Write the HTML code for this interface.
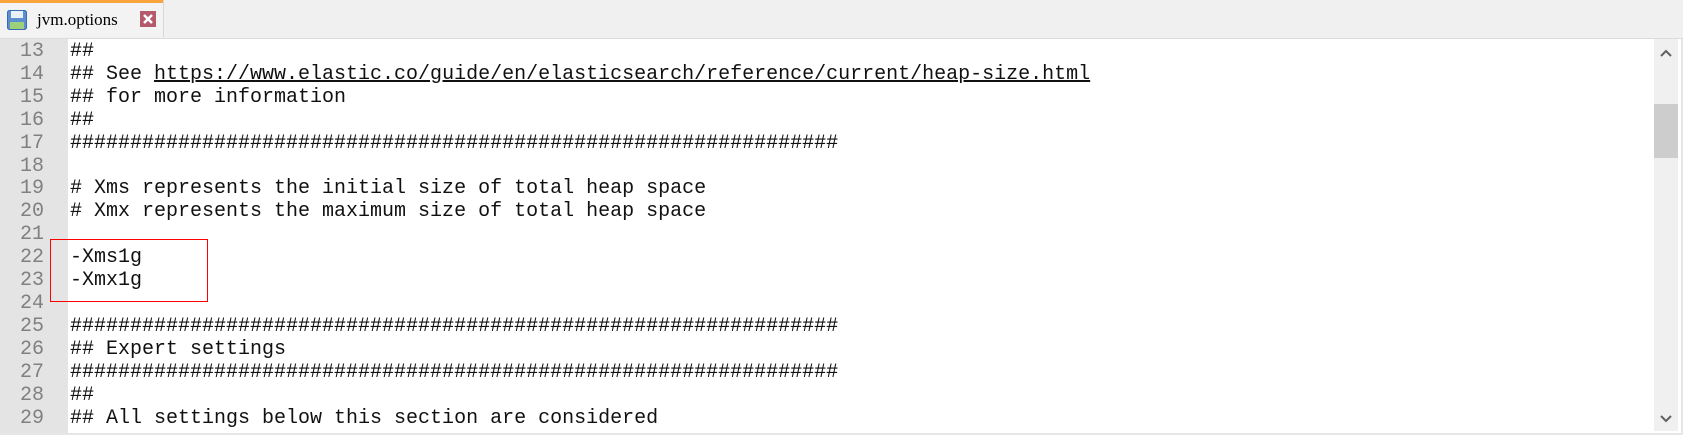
<!DOCTYPE html>
<html><head><meta charset="utf-8"><style>
body{margin:0;width:1683px;height:435px;background:#f0f0f0;position:relative;overflow:hidden;font-family:"Liberation Sans",sans-serif}
.tab{position:absolute;left:0;top:0;width:163px;height:37px;background:#f3f3f3;border-right:1px solid #d8d8d8}
.tab .bar{position:absolute;left:0;top:0;width:163px;height:3px;background:#f9a43c}
.tab .t{position:absolute;left:37px;top:10px;font-size:17px;font-family:"Liberation Serif","Noto Serif CJK SC",serif;color:#000}
.ed{position:absolute;left:0;top:38px;width:1681px;height:394px;background:#fff;border-top:1px solid #dcdcdc;border-right:2px solid #e6e6e6;border-bottom:2px solid #e6e6e6}
.gut{position:absolute;left:0;top:0;width:68px;height:394px;background:#e4e4e4}
.ln{position:absolute;left:0;width:44px;text-align:right;color:#808080;font:20px/22.9px "Liberation Mono",monospace;white-space:pre}
.code{position:absolute;left:70px;font:20px/22.9px "Liberation Mono",monospace;white-space:pre;color:#111}
.sb{position:absolute;left:1654px;top:0;width:24px;height:392px;background:#f0f0f0}
.th{position:absolute;left:1654px;top:65px;width:24px;height:54px;background:#cdcdcd}
.box{position:absolute;left:50px;top:239px;width:156px;height:61px;border:1px solid #f00}
</style></head><body>
<div class="tab"><div class="bar"></div>
<svg style="position:absolute;left:7px;top:10px" width="20" height="20" viewBox="0 0 20 20"><rect x="0.5" y="0.5" width="19" height="19" rx="2" fill="#5b8fd0" stroke="#3a6bb0"/><rect x="4" y="1" width="12" height="7" fill="#e8f0fa"/><rect x="3" y="12" width="14" height="7" fill="#9dd07a"/></svg>
<div class="t">jvm.options</div>
<svg style="position:absolute;left:140px;top:11px" width="16" height="16" viewBox="0 0 16 16"><rect width="16" height="16" fill="#b35a6c"/><path d="M4 4L12 12M12 4L4 12" stroke="#fff" stroke-width="2.5"/></svg>
</div>
<div class="ed">
<div class="gut"></div>
<div class="ln" style="top:2px">13
14
15
16
17
18
19
20
21
22
23
24
25
26
27
28
29</div>
<div class="code" style="top:2px">##
## See <u>https://www.elastic.co/guide/en/elasticsearch/reference/current/heap-size.html</u>
## for more information
##
################################################################

# Xms represents the initial size of total heap space
# Xmx represents the maximum size of total heap space

-Xms1g
-Xmx1g

################################################################
## Expert settings
################################################################
##
## All settings below this section are considered</div>
<div class="sb"></div><div class="th"></div>
<svg style="position:absolute;left:1660px;top:10px" width="12" height="8" viewBox="0 0 12 8"><path d="M1 7L6 2L11 7" stroke="#606060" stroke-width="2" fill="none"/></svg>
<svg style="position:absolute;left:1660px;top:376px" width="12" height="8" viewBox="0 0 12 8"><path d="M1 1L6 6L11 1" stroke="#606060" stroke-width="2" fill="none"/></svg>
</div>
<div class="box"></div>
</body></html>
